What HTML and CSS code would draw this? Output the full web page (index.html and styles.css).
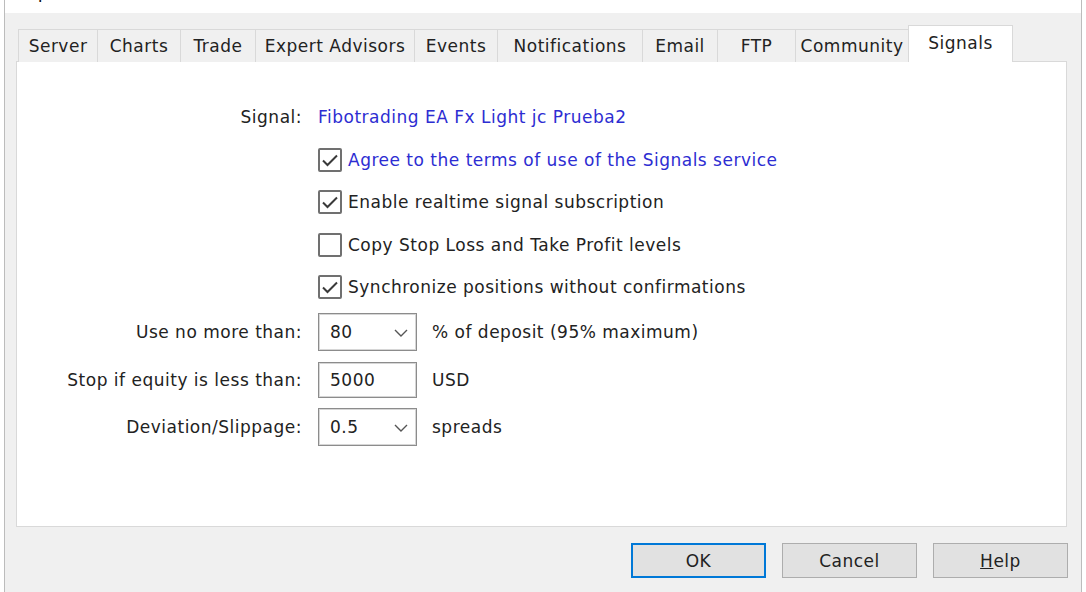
FILE: index.html
```html
<!DOCTYPE html>
<html>
<head>
<meta charset="utf-8">
<link rel="stylesheet" href="styles.css">
</head>
<body>
<div class="dialog">
  <div class="titlebar">
    <span class="title">Options</span>
    <span class="title-help">?</span>
  </div>
  <div class="content">
    <div class="tabs">
      <div class="tab">Server</div>
      <div class="tab">Charts</div>
      <div class="tab">Trade</div>
      <div class="tab">Expert Advisors</div>
      <div class="tab">Events</div>
      <div class="tab">Notifications</div>
      <div class="tab">Email</div>
      <div class="tab">FTP</div>
      <div class="tab">Community</div>
      <div class="tab tab-active">Signals</div>
    </div>
    <div class="panel">
      <div class="form">
        <div class="label">Signal:</div>
        <div class="value link">Fibotrading EA Fx Light jc Prueba2</div>

        <div></div>
        <label class="check link">
          <span class="box"><svg viewBox="0 0 24 24" width="24" height="24"><path d="M5 12.5 L9.5 17 L19 7.5" fill="none" stroke="#3a3a3a" stroke-width="2"/></svg></span>
          <span>Agree to the terms of use of the Signals service</span>
        </label>

        <div></div>
        <label class="check">
          <span class="box"><svg viewBox="0 0 24 24" width="24" height="24"><path d="M5 12.5 L9.5 17 L19 7.5" fill="none" stroke="#3a3a3a" stroke-width="2"/></svg></span>
          <span>Enable realtime signal subscription</span>
        </label>

        <div></div>
        <label class="check">
          <span class="box"></span>
          <span>Copy Stop Loss and Take Profit levels</span>
        </label>

        <div></div>
        <label class="check">
          <span class="box"><svg viewBox="0 0 24 24" width="24" height="24"><path d="M5 12.5 L9.5 17 L19 7.5" fill="none" stroke="#3a3a3a" stroke-width="2"/></svg></span>
          <span>Synchronize positions without confirmations</span>
        </label>

        <div class="label">Use no more than:</div>
        <div class="value">
          <div class="combo"><span>80</span><svg class="chev" viewBox="0 0 14 8" width="14" height="8"><path d="M1 1 L7 7 L13 1" fill="none" stroke="#555" stroke-width="1.4"/></svg></div>
          <span class="unit">% of deposit (95% maximum)</span>
        </div>

        <div class="label">Stop if equity is less than:</div>
        <div class="value">
          <div class="input"><span>5000</span></div>
          <span class="unit">USD</span>
        </div>

        <div class="label">Deviation/Slippage:</div>
        <div class="value">
          <div class="combo"><span>0.5</span><svg class="chev" viewBox="0 0 14 8" width="14" height="8"><path d="M1 1 L7 7 L13 1" fill="none" stroke="#555" stroke-width="1.4"/></svg></div>
          <span class="unit">spreads</span>
        </div>
      </div>
    </div>
    <div class="buttons">
      <button class="btn btn-default">OK</button>
      <button class="btn">Cancel</button>
      <button class="btn"><u>H</u>elp</button>
    </div>
  </div>
</div>
</body>
</html>
```
FILE: styles.css
```css
html, body {
  margin: 0;
  padding: 0;
  background: #ffffff;
}
body {
  font-family: "DejaVu Sans", "Liberation Sans", sans-serif;
  font-size: 17px;
  letter-spacing: 0.5px;
  color: #222222;
  width: 1086px;
  height: 592px;
  overflow: hidden;
}
.dialog {
  margin-left: 4px;
  width: 1078px;
  height: 592px;
  border-left: 1px solid #bcbcbc;
  border-right: 1px solid #bcbcbc;
  box-sizing: border-box;
  background: #f0f0f0;
  display: flex;
  flex-direction: column;
}
.titlebar {
  height: 13px;
  background: #ffffff;
  overflow: hidden;
  position: relative;
  display: flex;
  justify-content: space-between;
}
.title {
  margin-top: -20px;
  margin-left: 18px;
  font-size: 18px;
  line-height: 24px;
  color: #111;
}
.title-help {
  margin-top: -20px;
  margin-right: 36px;
  font-size: 18px;
  line-height: 24px;
  color: #333;
}
.content {
  flex: 1;
  padding: 12px 0 0 0;
}
.tabs {
  display: flex;
  align-items: flex-end;
  height: 37px;
  margin-left: 13px;
  margin-bottom: -1px;
}
.tab {
  height: 33px;
  box-sizing: border-box;
  border: 1px solid #d9d9d9;
  border-bottom: none;
  margin-right: -1px;
  background: #f0f0f0;
  text-align: center;
  line-height: 32px;
  white-space: nowrap;
  color: #222;
}
.tab:nth-child(1) { width: 80px; }
.tab:nth-child(2) { width: 84px; }
.tab:nth-child(3) { width: 76px; }
.tab:nth-child(4) { width: 160px; }
.tab:nth-child(5) { width: 84px; }
.tab:nth-child(6) { width: 146px; }
.tab:nth-child(7) { width: 76px; }
.tab:nth-child(8) { width: 79px; }
.tab:nth-child(9) { width: 114px; }
.tab:nth-child(10) { width: 105px; }
.tab-active {
  height: 37px;
  background: #ffffff;
  position: relative;
  z-index: 1;
  line-height: 34px;
}
.panel {
  margin-left: 11px;
  width: 1051px;
  height: 466px;
  box-sizing: border-box;
  background: #ffffff;
  border: 1px solid #d9d9d9;
  padding-top: 34px;
}
.form {
  display: grid;
  grid-template-columns: 285px auto;
  column-gap: 16px;
  grid-template-rows: repeat(5, 42.5px) repeat(3, 47.5px);
  align-items: center;
}
.label {
  text-align: right;
  white-space: nowrap;
}
.value {
  display: flex;
  align-items: center;
  white-space: nowrap;
}
.link {
  color: #2d2dd2;
}
.check {
  display: flex;
  align-items: center;
  gap: 6px;
  white-space: nowrap;
}
.box {
  width: 24px;
  height: 24px;
  box-sizing: border-box;
  border: 2px solid #707070;
  border-radius: 2px;
  background: #fff;
  display: flex;
  align-items: center;
  justify-content: center;
  overflow: hidden;
}
.box svg {
  flex: none;
}
.combo, .input {
  width: 99px;
  box-sizing: border-box;
  border: 1px solid #8c8c8c;
  box-shadow: inset 0 0 0 1px #d6d6d6;
  background: #fff;
  display: flex;
  align-items: center;
  justify-content: space-between;
  padding: 0 8px 0 11px;
  color: #222;
}
.combo {
  height: 38px;
}
.input {
  height: 36px;
}
.chev {
  margin-top: 2px;
}
.unit {
  margin-left: 15px;
}
.buttons {
  margin-top: 16px;
  margin-left: 11px;
  width: 1052px;
  display: flex;
  justify-content: flex-end;
  gap: 16px;
}
.btn {
  width: 135px;
  height: 35px;
  box-sizing: border-box;
  background: #e1e1e1;
  border: 1px solid #adadad;
  font-family: "DejaVu Sans", "Liberation Sans", sans-serif;
  font-size: 17px;
  letter-spacing: 0.5px;
  color: #222;
  padding: 0;
}
.btn-default {
  border: 2px solid #0078d7;
}
```
